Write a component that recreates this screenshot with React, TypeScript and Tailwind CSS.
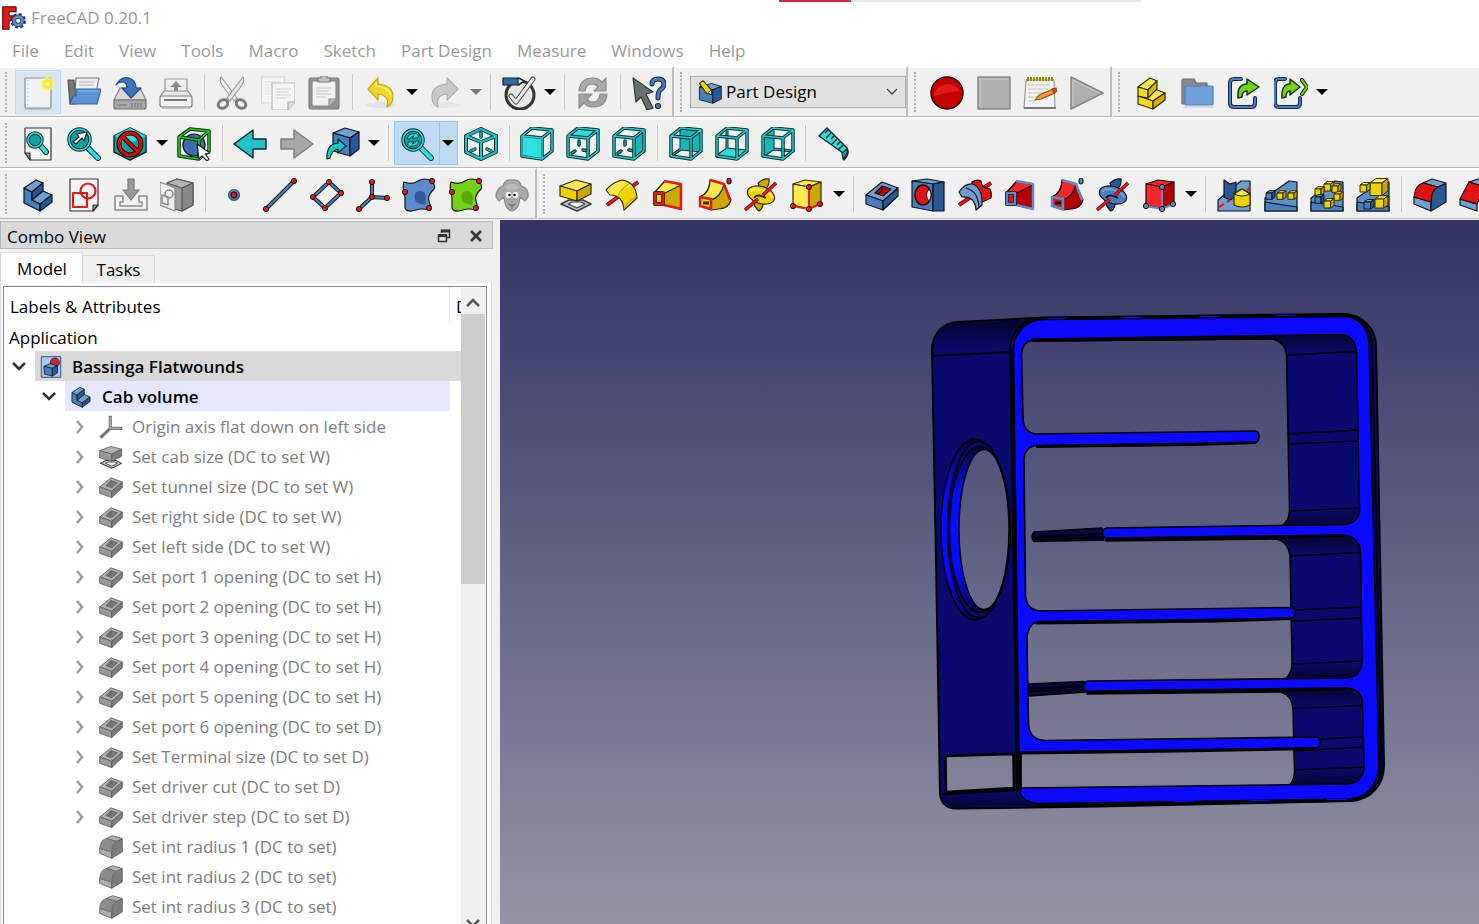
import type { ReactNode } from "react";

const menus = ["File", "Edit", "View", "Tools", "Macro", "Sketch", "Part Design", "Measure", "Windows", "Help"];

type Palette = { light: string; mid: string; dark: string; line: string };

const blue: Palette = { light: "#729fcf", mid: "#4a7fbf", dark: "#2b5797", line: "#0b1521" };
const yellow: Palette = { light: "#fce94f", mid: "#edd400", dark: "#c9a800", line: "#302b00" };
const red: Palette = { light: "#ef2929", mid: "#dd1515", dark: "#b30000", line: "#280000" };
const gray: Palette = { light: "#b0b0b0", mid: "#9a9a9a", dark: "#7d7d7d", line: "#5c5c5c" };

const CYAN = "#2fdede";
const TEAL = "#12a3a6";
const INK = "#0b2c2e";

function Svg({ children, className = "w-[34px] h-[34px]" }: { children: ReactNode; className?: string }) {
  return (
    <svg viewBox="0 0 34 34" className={className} fill="none" strokeLinejoin="round" strokeWidth={1.2} aria-hidden="true">
      {children}
    </svg>
  );
}

// Double stroke: dark outline with a coloured core
function Rod({ d, color, line = "#1a1a1a", width = 2 }: { d: string; color: string; line?: string; width?: number }) {
  return (
    <>
      <path d={d} stroke={line} strokeWidth={width + 2} strokeLinecap="round" />
      <path d={d} stroke={color} strokeWidth={width} strokeLinecap="round" />
    </>
  );
}

function Dots({ points, fill = "#e01b1b", r = 2.6 }: { points: number[][]; fill?: string; r?: number }) {
  return (
    <>
      {points.map(([x, y]) => (
        <circle key={`${x}-${y}`} cx={x} cy={y} r={r} fill={fill} stroke="#280000" strokeWidth={1} />
      ))}
    </>
  );
}

/* ---------- file icons ---------- */

const NewFile = () => (
  <Svg>
    <ellipse cx="17" cy="33" rx="15" ry="1" fill="#b9c3cb" />
    <rect x="4" y="2" width="26" height="30" rx="1" fill="#f1f1f1" stroke="#8b8b8b" />
    <path d="M6.500 4v26" stroke="#c9c9c9" strokeDasharray="1 3" />
    <circle cx="26.500" cy="8" r="7" fill="#fff27a" opacity=".7" />
    <circle cx="26.500" cy="8" r="5" fill="#ffe628" />
    <circle cx="26.500" cy="8" r="2" fill="#fffbd0" />
  </Svg>
);

const OpenFile = () => (
  <Svg>
    <path d="M1 4h6l2 24H3z" fill="#777" stroke="#555" />
    <path d="M9 2h23l-3 15H8z" fill="#f0f0f0" stroke="#777" />
    <path d="M12 6h16M12 9h15" stroke="#b4b4b4" />
    <path d="M9 13h25l-4 15H3l3-8h3z" fill="#5d92d2" stroke="#3465a4" />
    <path d="M11 15h20" stroke="#8db7e6" />
  </Svg>
);

const SaveFile = () => (
  <Svg>
    <path d="M7 12h20l6 12H1z" fill="#d8d8d8" stroke="#888" />
    <path d="M1 24h32v7q0 2-2 2H3q-2 0-2-2z" fill="#a8a8a8" stroke="#6d6d6d" />
    <path d="M4 29h10M19 27v4M22 27v4M25 27v4M28 27v4" stroke="#777" />
    <path d="M3 9Q8 0 16 2q7 2 7 10h5L18 22 9 12h5q0-6-5-6-4 0-6 3z" fill="#3f74b8" stroke="#204a87" />
  </Svg>
);

const Printer = () => (
  <Svg>
    <path d="M6 3h22v15H6z" fill="#eee" stroke="#999" />
    <path d="M17 5l6 6h-4v5h-4v-5h-4z" fill="#8a8a8a" />
    <path d="M5 15h24l4 6H1z" fill="#e9e9e9" stroke="#8a8a8a" />
    <rect x="1" y="20" width="32" height="11" rx="2" fill="#f2f2f2" stroke="#7d7d7d" />
    <path d="M5 24h23" stroke="#777" strokeWidth="2" />
    <path d="M3 32h28" stroke="#aaa" />
  </Svg>
);

const Scissors = () => (
  <Svg>
    <path d="M6 1q-2 3 1 8l12 16 3-3z" fill="#f4f4f4" stroke="#999" />
    <path d="M28 1q2 3-1 8L15 25l-3-3z" fill="#e6e6e6" stroke="#999" />
    <ellipse cx="8" cy="28" rx="5" ry="4" stroke="#7a7a7a" strokeWidth="3" transform="rotate(-35 8 28)" />
    <ellipse cx="26" cy="28" rx="5" ry="4" stroke="#7a7a7a" strokeWidth="3" transform="rotate(35 26 28)" />
  </Svg>
);

const CopyPages = () => (
  <Svg>
    <rect x="0.500" y="1" width="23" height="26" fill="#f5f5f5" stroke="#d4d4d4" />
    <path d="M4 6h15M4 9h15M4 12h6M4 15h6M4 18h6" stroke="#dcdcdc" />
    <path d="M11 7h23v19l-7 8H11z" fill="#f5f5f5" stroke="#bdbdbd" />
    <path d="M34 26h-7v8" fill="#ddd" stroke="#aaa" />
    <path d="M15 13h15M15 16h13M15 19h15M15 22h10" stroke="#cfcfcf" />
  </Svg>
);

const Clipboard = () => (
  <Svg>
    <rect x="2" y="2" width="30" height="31" rx="2" fill="#949494" stroke="#7b7b7b" />
    <path d="M5 5h24v18l-7 7H5z" fill="#f2f2f2" stroke="#888" />
    <path d="M29 23h-7v7" fill="#bbb" stroke="#888" />
    <path d="M11 6V2h3V0h6v2h3v4z" fill="#c4c4c4" stroke="#777" />
    <path d="M9 12h15M9 15h13M9 18h15M9 21h10" stroke="#c5c5c5" />
  </Svg>
);

const Undo = () => (
  <Svg>
    <ellipse cx="17" cy="29" rx="15" ry="3" fill="#e2e2e2" />
    <path d="M14 2v6q15 1 15 13 0 7-6 10 3-12-9-13v6L4 13z" fill="#efd82b" stroke="#c4a40c" />
    <path d="M12 6v4q12 1 15 9" stroke="#fff59a" />
  </Svg>
);

const Redo = () => (
  <Svg>
    <ellipse cx="17" cy="29" rx="15" ry="3" fill="#e5e5e5" />
    <path d="M19 2v6Q4 9 4 21q0 7 6 10Q7 19 19 18v6l11-11z" fill="#cacaca" stroke="#ababab" />
  </Svg>
);

const CheckSketch = () => (
  <Svg>
    <circle cx="18" cy="19" r="14" fill="#e6e6e6" stroke="#2e3436" strokeWidth="3" />
    <path d="M1 2h16l5 3-5 4H1z" fill="#3465a4" stroke="#101c30" />
    <path d="M16 2l6 3-6 4z" fill="#eee" stroke="#222" />
    <Rod d="M9 20l5 6L31 3" color="#e9e9e9" line="#454545" width={3} />
  </Svg>
);

const Refresh = () => (
  <Svg>
    <path d="M3 15Q4 2 17 2q6 0 9 4l4-4v13H18l4-4q-2-3-6-3-6 0-7 7z" fill="#aaa" stroke="#8a8a8a" />
    <path d="M31 18q-1 13-14 13-6 0-9-4l-5 5V18h13l-5 5q2 3 6 3 6 0 7-8z" fill="#a2a2a2" stroke="#8a8a8a" />
  </Svg>
);

const WhatsThis = () => (
  <Svg>
    <path d="M1 2l20 14-7 2 7 14-6 2-6-13-5 5z" fill="#6a6e6c" stroke="#2e3436" />
    <Rod d="M20 8q0-5 6-5 6 0 6 5 0 4-4 6-2 2-2 8" color="#4879bb" line="#14294a" width={3} />
    <circle cx="26" cy="30" r="2.500" fill="#4879bb" stroke="#14294a" />
  </Svg>
);

const Record = () => (
  <Svg>
    <circle cx="17" cy="17" r="16" fill="#c30000" stroke="#280000" strokeWidth="1.500" />
    <path d="M4 20a14 14 0 0 1 26-5Q17 16 4 20z" fill="#e01c1c" />
  </Svg>
);

const Stop = () => (
  <Svg>
    <rect x="1" y="1" width="32" height="32" fill="#b0b0b0" stroke="#888" strokeWidth="1.500" />
    <path d="M3 31V3h28" stroke="#c8c8c8" />
  </Svg>
);

const MacroEdit = () => (
  <Svg>
    <path d="M3 4h28l1 28H1z" fill="#f3f3f3" stroke="#989898" />
    <path d="M1 32h32" stroke="#777" strokeWidth="2" />
    <path d="M5 9h22M5 13h20M5 17h22M5 21h10M5 25h7" stroke="#c2c2c2" />
    <path d="M5 1v4M8 1v4M11 1v4M14 1v4M17 1v4M20 1v4M23 1v4M26 1v4M29 1v4" stroke="#938300" strokeWidth="2" />
    <path d="M12 24l4-5 14-6 2 4-14 6z" fill="#eb9c3b" stroke="#96500c" />
    <path d="M29 13l4-1 1 3-3 2z" fill="#e04242" stroke="#96500c" />
  </Svg>
);

const Play = () => (
  <Svg>
    <path d="M1 1l32 16L1 33z" fill="#b0b0b0" stroke="#858585" strokeWidth="1.500" />
    <path d="M3 30V4l26 13" stroke="#c8c8c8" />
  </Svg>
);

const PartIcon = () => (
  <Svg>
    <g stroke={yellow.line}>
      <path d="M4 20l14-8 13 5-12 8z" fill="#fce94f" />
      <path d="M4 20l15 5v8L4 28z" fill="#f2dd20" />
      <path d="M19 25l12-8v7l-12 9z" fill="#d0ae00" />
      <path d="M4 11l12-9 7 3-9 9z" fill="#fce94f" />
      <path d="M4 11l10 3v8L4 20z" fill="#f2dd20" />
      <path d="M14 14l9-9v8l-9 9z" fill="#d9b900" />
    </g>
  </Svg>
);

const GroupFolder = () => (
  <Svg>
    <path d="M1 4q0-1 1-1h11l2 4h11v21H1z" fill="#8a8a8a" stroke="#6b6b6b" />
    <rect x="4" y="10" width="28" height="19" rx="1" fill="#6fa0da" stroke="#4a7dbd" />
    <path d="M2 31h31" stroke="#cfcfcf" />
  </Svg>
);

const MakeLink = () => (
  <Svg>
    <Rod d="M14 3H7q-4 0-4 4v20q0 4 4 4h17q4 0 4-4v-5" color="#4a7dbd" line="#14294a" width={2} />
    <path d="M11 22Q10 8 20 8V3l12 8-12 8v-4q-5 0-5 6z" fill="#73d216" stroke="#17380a" strokeWidth="1.500" />
  </Svg>
);

const LinkActions = () => (
  <Svg>
    <Rod d="M11 3H5q-4 0-4 4v20q0 4 4 4h17q4 0 4-4v-5" color="#4a7dbd" line="#14294a" width={2} />
    <path d="M8 22Q7 8 16 8V3l10 8-10 8v-4q-4 0-4 6z" fill="#73d216" stroke="#17380a" strokeWidth="1.500" />
    <Rod d="M28 4l5 7-5 7" color="#73d216" line="#17380a" />
  </Svg>
);

/* ---------- view icons ---------- */

function Lens({ x = 13, y = 14, r = 9, hx = 30, hy = 31 }) {
  return (
    <>
      <Rod d={`M${x + r * 0.7} ${y + r * 0.7}L${hx} ${hy}`} color={CYAN} line={INK} width={4} />
      <circle cx={x} cy={y} r={r} fill={TEAL} stroke={INK} strokeWidth="3.500" />
      <circle cx={x} cy={y} r={r} stroke={CYAN} strokeWidth="1.500" />
    </>
  );
}

const FitAll = () => (
  <Svg>
    <path d="M4 1h26v32H9l-5-7z" fill="#f3f3f3" stroke="#333" />
    <path d="M4 26h5v7z" fill="#999" stroke="#333" />
    <Lens x={14} y={13} r={7} hx={25} hy={25} />
  </Svg>
);

const FitSelection = () => (
  <Svg>
    <Lens x={12.500} y={12.500} r={10.500} hx={31} hy={31} />
    <path d="M6 15l6-5-2-3 10-2-3 9-2-3-6 6z" fill="#fff" stroke="#222" />
  </Svg>
);

const DrawStyle = () => (
  <Svg>
    <path d="M17 1l16 8v16l-16 8-16-8V9z" fill={TEAL} stroke={INK} strokeWidth="1.500" />
    <path d="M17 1l16 8-16 7L1 9z" fill={CYAN} />
    <circle cx="17" cy="17" r="11" stroke="#280000" strokeWidth="5" />
    <path d="M9 9l16 16" stroke="#280000" strokeWidth="5" />
    <circle cx="17" cy="17" r="11" stroke="#d01010" strokeWidth="3" />
    <path d="M9 9l16 16" stroke="#d01010" strokeWidth="3" />
  </Svg>
);

const BoundBox = () => (
  <Svg>
    <circle cx="17" cy="18" r="11" fill="#3b6db0" stroke="#0b1521" />
    <Rod d="M2 10l20 3v19L2 29zM2 10l11-8 19 2-10 9M32 4v20l-10 8" color="#19d619" line="#0a2f0a" width={1.500} />
    <path d="M20 17l13 9-5 1 4 5-2 2-5-5-3 3z" fill="#fff" stroke="#222" />
  </Svg>
);

const Back = () => (
  <Svg>
    <path d="M1 17L20 3v9h13v10H20v9z" fill="#1fc4c7" stroke={INK} strokeWidth="1.500" />
  </Svg>
);

const Forward = () => (
  <Svg>
    <path d="M33 17L14 3v9H1v10h13v9z" fill="#a8a8a8" stroke="#7c7c7c" strokeWidth="1.500" />
  </Svg>
);

const LinkNav = () => (
  <Svg>
    <path d="M7 6l12-5 14 4-9 6z" fill={blue.light} stroke={blue.line} />
    <path d="M7 6l17 5v18L7 24z" fill={blue.mid} stroke={blue.line} />
    <path d="M24 11l9-6v17l-9 7z" fill={blue.dark} stroke={blue.line} />
    <path d="M1 32q-1-15 11-16v-4l8 7-8 7v-4q-6 1-8 9z" fill="#1fc4c7" stroke={INK} />
  </Svg>
);

const SyncView = () => (
  <Svg>
    <Lens x={13} y={13} r={10} hx={31} hy={31} />
    <path d="M7 12q2-6 8-5l3-2v6h-6l2-2q-3 0-4 3zM19 14q-2 6-8 5l-3 2v-6h6l-2 2q3 0 4-3z" fill={CYAN} stroke={INK} strokeWidth=".8" />
  </Svg>
);

const IsoView = () => (
  <Svg>
    <path d="M17 2l15 7v16l-15 7-15-7V9z" fill="#f0f0f0" />
    <Rod d="M17 2l15 7v16l-15 7-15-7V9zM2 9l15 6 15-6M17 15v17" color="#1fc4c7" line={INK} />
    <path d="M17 6v4M7 24l4-2M27 24l-4-2" stroke={INK} strokeWidth="3.500" strokeLinecap="round" />
    <path d="M17 6v4M7 24l4-2M27 24l-4-2" stroke={TEAL} strokeWidth="2" strokeLinecap="round" />
  </Svg>
);

const cubeFaces: Record<string, string> = {
  front: "M2 9l20 2v21L2 29z",
  top: "M2 9l20 2 10-8-20-2z",
  right: "M22 11l10-8v21l-10 8z",
  rear: "M12 1l20 2v21l-20-2z",
  bottom: "M2 29l20 3 10-8-20-2z",
  left: "M2 9l10-8v21L2 29z",
};

function ViewCube({ face }: { face: string }) {
  const solid = face === "front" || face === "top" || face === "right";
  return (
    <Svg>
      {!solid && <Rod d="M12 1v21L2 29M12 22l20 2" color="#1fc4c7" line={INK} width={1} />}
      {solid && face !== "front" && (
        <>
          <path d="M13 14v4M6 26l3-2M17 23l5 1" stroke={INK} strokeWidth="3.500" strokeLinecap="round" />
          <path d="M13 14v4M6 26l3-2M17 23l5 1" stroke={TEAL} strokeWidth="1.500" strokeLinecap="round" />
        </>
      )}
      <path d={cubeFaces[face]} fill={face === "right" || face === "left" || face === "rear" ? "#1cb6b9" : CYAN} />
      <Rod d="M2 9l20 2v21L2 29zM2 9l10-8 20 2-10 8M32 3v21l-10 8" color="#22cdd0" line={INK} width={1.500} />
      {face === "front" && <path d="M3 10l18 2v19L3 28z" fill={CYAN} />}
    </Svg>
  );
}

const Ruler = () => (
  <Svg>
    <path d="M2 9l8-8 20 20q3 6-3 12l-1-7z" fill={CYAN} stroke={INK} strokeWidth="1.500" />
    <path d="M25 26l5-4q1 6-4 10z" fill={TEAL} stroke={INK} />
    <path d="M11 3l-3 3M14 6l-5 5M17 9l-3 3M20 12l-5 5M23 15l-3 3M26 18l-5 5" stroke={INK} strokeWidth="1.500" />
  </Svg>
);

/* ---------- part design icons ---------- */

const Body = ({ className }: { className?: string }) => (
  <Svg className={className}>
    <g stroke={blue.line}>
      <path d="M3 10l8 4v8l8 4v7L3 25z" fill={blue.mid} />
      <path d="M3 10l12-8 7 3-11 9z" fill={blue.light} />
      <path d="M11 14l11-9v8l-11 9z" fill={blue.dark} />
      <path d="M11 22l11-9 9 4-12 9z" fill={blue.light} />
      <path d="M19 26l12-9v7l-12 9z" fill={blue.dark} />
    </g>
  </Svg>
);

const SketchIcon = () => (
  <Svg>
    <path d="M3 1h28v26l-5 6H3z" fill="#f5f5f5" stroke="#333" />
    <path d="M31 27h-5v6z" fill="#999" stroke="#333" />
    <rect x="6" y="15" width="14" height="14" stroke="#e01b1b" strokeWidth="2.200" />
    <circle cx="21" cy="13" r="7.500" stroke="#e01b1b" strokeWidth="2.200" />
  </Svg>
);

const ImportSketch = () => (
  <Svg>
    <path d="M1 18h8v6H6v4h22v-4h-3v-6h8v14H1z" fill="#f3f3f3" stroke="#888" strokeWidth="1.500" />
    <path d="M14 1h6v11h5l-8 10-8-10h5z" fill="#9a9a9a" stroke="#777" />
  </Svg>
);

const MapSketch = () => (
  <Svg>
    <path d="M7 5l10-4 16 4v22l-11 6-15-4z" fill="#9a9a9a" stroke="#555" />
    <path d="M7 5l15 5 11-5-16-4z" fill="#b7b7b7" stroke="#555" />
    <path d="M22 10l11-5v22l-11 6z" fill="#888" stroke="#555" />
    <path d="M0 4l15 6v23L0 27z" fill="#efefef" stroke="#888" />
    <circle cx="9" cy="16" r="4" stroke="#888" strokeWidth="1.500" />
    <path d="M2 17l6 2v8l-6-2z" stroke="#888" strokeWidth="1.500" />
  </Svg>
);

const PointIcon = () => (
  <Svg>
    <circle cx="17" cy="17" r="5.500" fill="#4a7fbf" stroke="#2b5797" />
    <circle cx="17" cy="17" r="2.800" fill="#e01b1b" stroke="#5a0000" />
  </Svg>
);

const LineIcon = () => (
  <Svg>
    <Rod d="M3 31L31 3" color="#4a7fbf" />
    <Dots points={[[3, 31], [31, 3]]} />
  </Svg>
);

const PlaneIcon = () => (
  <Svg>
    <Rod d="M19 4l12 11-16 15L3 19z" color="#4a7fbf" />
    <Dots points={[[19, 4], [31, 15], [15, 30], [3, 19]]} />
  </Svg>
);

const AxesIcon = () => (
  <Svg>
    <Rod d="M16 4v15l15 1M16 19L3 31" color="#4a7fbf" />
    <Dots points={[[16, 4], [16, 19], [31, 20], [3, 31]]} />
  </Svg>
);

function Patch({ fill, shade }: { fill: string; shade: string }) {
  return (
    <Svg>
      <path d="M2 4q8 3 14-1t14 0q4 5 2 8-7 7-5 12 3 9-1 9-6-2-12 0-9 3-11-2 0-5 0-11-3-8-1-15z" fill={fill} stroke="#0b1521" />
      <path d="M14 14q7-3 9 2t0 11q-6-1-9-3-3-6 0-10z" fill={shade} opacity=".7" />
      <Dots points={[[30, 3], [3, 14], [27, 30]]} />
    </Svg>
  );
}

const Sheep = () => (
  <Svg>
    <path d="M8 8q2-7 9-6 8-1 9 6 8 2 7 11l-3 4-5-4q-1 13-8 14-7-1-8-14l-5 4-3-4Q1 10 8 8z" fill="#a9a9a9" stroke="#888" />
    <path d="M9 9q8-6 16 0-2 3-8 2-6 1-8-2z" fill="#bcbcbc" />
    <circle cx="13.500" cy="17" r="3" fill="#fff" />
    <circle cx="20.500" cy="17" r="3" fill="#fff" />
    <circle cx="14.500" cy="17" r="1.300" fill="#222" />
    <circle cx="19.500" cy="17" r="1.300" fill="#222" />
    <path d="M14 26l3 2 3-2M17 28v3" stroke="#666" />
  </Svg>
);

function Pad({ c = yellow, className }: { c?: Palette; className?: string }) {
  return (
    <Svg className={className}>
      <path d="M2 26l8-4h14l8 4-14 7z" fill="#ccc" stroke="#3a3a3a" strokeWidth="1.500" />
      <path d="M9 26l4-2h9l4 2-8 4z" fill="#f0f0f0" stroke="#3a3a3a" />
      <g stroke={c.line}>
        <path d="M1 8l16-6 15 4-14 7z" fill={c.light} />
        <path d="M1 8l17 5v10L1 18z" fill={c.mid} />
        <path d="M18 13l14-7v10l-14 7z" fill={c.dark} />
      </g>
    </Svg>
  );
}

const Revolution = () => (
  <Svg>
    <path d="M2 27L33 4" stroke="#7a0000" strokeWidth="4" />
    <path d="M2 27L33 4" stroke="#e01b1b" strokeWidth="2.500" />
    <path d="M1 12Q9 3 18 2q13 3 14 18L19 32q-1-15-14-15z" fill={yellow.mid} stroke={yellow.line} />
    <path d="M2 12Q9 4 18 3q6 2 9 6-9-1-14 8-4-1-8-1z" fill={yellow.light} />
    <path d="M13 17q4-7 11-11M19 31q3-7 12-12" stroke={yellow.dark} />
  </Svg>
);

const Groove = () => (
  <Svg>
    <path d="M1 27L33 5" stroke="#7a0000" strokeWidth="4" />
    <path d="M1 27L33 5" stroke="#e01b1b" strokeWidth="2.500" />
    <path d="M14 4q5-3 9-1 0 7 9 8 2 4 1 9l-9 4Q22 11 14 10z" fill={red.mid} stroke={red.line} />
    <path d="M1 14Q7 5 15 6q10 5 9 21l-6 5q-1-14-14-13z" fill={blue.light} stroke={blue.line} />
    <path d="M8 10q12 3 13 19" stroke={blue.line} />
  </Svg>
);

function Loft({ c, edge }: { c: Palette; edge: string }) {
  return (
    <Svg>
      <path d="M3 14L13 3l16 4v24L11 27z" fill={c.mid} stroke={c.line} />
      <path d="M11 15L29 7v24L11 27z" fill={c.dark} />
      <path d="M3 14L13 3l16 4-18 9z" fill={c.light} stroke={c.line} />
      <path d="M12 3l17 3v25l-17-4" stroke={edge} strokeWidth="2.500" />
      <path d="M3 15h8v11H3z" fill={c.mid} stroke={c.line} strokeWidth="4" />
      <path d="M3 15h8v11H3z" stroke={edge} strokeWidth="2.500" />
    </Svg>
  );
}

function Pipe({ c, edge }: { c: Palette; edge: string }) {
  return (
    <Svg>
      <path d="M2 19Q12 14 12 2l14 4 7 16q-2 8-12 9l-8 1-11-4z" fill={c.dark} stroke={c.line} />
      <path d="M2 19Q12 15 12 2l14 4q-3 13-13 16z" fill={c.light} stroke={c.line} />
      <path d="M12 2l14 4 6 16" stroke={edge} strokeWidth="2.500" />
      <path d="M2 19l11 2v10L2 28z" fill={c.mid} stroke={edge} strokeWidth="2.500" />
      <path d="M5 25h6" stroke={c.line} strokeWidth="3" />
      <ellipse cx="31" cy="3" rx="2" ry="3" fill={edge} stroke="#222" />
    </Svg>
  );
}

function Helix({ c }: { c: Palette }) {
  return (
    <Svg>
      <path d="M14 5q6-5 11-4 1 8-7 13z" fill={c.dark} stroke={c.line} />
      <path d="M9 23q2 7 6 10 5-3 4-11z" fill={c.dark} stroke={c.line} />
      <ellipse cx="17" cy="17" rx="14" ry="8.500" fill={c.mid} stroke={c.line} transform="rotate(18 17 17)" />
      <path d="M6 14q3-5 12-2 9 3 11 8" stroke={c.light} strokeWidth="2" />
      <path d="M10 20q3-5 12 0" stroke={c.line} strokeWidth="2" />
      <path d="M1 32L14 21M19 17L32 5" stroke="#8a0000" strokeWidth="3.500" />
      <path d="M1 32L14 21M19 17L32 5" stroke="#e01b1b" strokeWidth="2" />
    </Svg>
  );
}

function Primitive({ c, dot }: { c: Palette; dot: string }) {
  return (
    <Svg>
      <path d="M3 6l12-4 16 2-12 5z" fill={c.light} stroke={c.line} />
      <path d="M3 6l16 3v22L3 27z" fill={c.light} stroke={c.line} />
      <path d="M19 9l12-5v21l-12 6z" fill={c.dark} stroke={c.line} />
      <path d="M3 28l16 3 11-5M19 31V10" stroke={dot} strokeWidth="2" />
      <Dots points={[[19, 9], [3, 28], [19, 31], [30, 26]]} fill={dot} />
    </Svg>
  );
}

function Pocket({ c = blue, hole = "#cc0000", className }: { c?: Palette; hole?: string; className?: string }) {
  return (
    <Svg className={className}>
      <g stroke={c.line}>
        <path d="M1 17L17 4l16 6-15 13z" fill={c.light} />
        <path d="M1 17l17 6v9L1 26z" fill={c.mid} />
        <path d="M18 23l15-13v8L18 32z" fill={c.dark} />
        <path d="M10 15l7-7 9 3-8 7z" fill={hole} />
        <path d="M17 8v5l-4 3" />
      </g>
    </Svg>
  );
}

const Hole = () => (
  <Svg>
    <path d="M1 3l15-2 17 3-11 2z" fill={blue.light} stroke={blue.line} />
    <path d="M1 3l21 3v27L1 29z" fill={blue.mid} stroke={blue.line} />
    <path d="M22 6l11-2v29H22z" fill={blue.dark} stroke={blue.line} />
    <ellipse cx="12" cy="17" rx="8" ry="10" fill="#dd1515" stroke="#280000" strokeWidth="1.500" />
    <path d="M18 11q4 6 0 12-5-6 0-12z" fill="#f3f3f3" stroke="#280000" strokeWidth=".8" />
  </Svg>
);

function MiniCube({ x, y, s, c }: { x: number; y: number; s: number; c: Palette }) {
  return (
    <g stroke={c.line} strokeWidth="1">
      <path d={`M${x} ${y}l${s / 3} ${-s / 4}h${s * 0.67}l${-s / 3} ${s / 4}z`} fill={c.light} />
      <path d={`M${x} ${y}h${s * 0.67}v${s * 0.7}h${-s * 0.67}z`} fill={c.mid} />
      <path d={`M${x + s * 0.67} ${y}l${s * 0.33} ${-s / 4}v${s * 0.7}l${-s * 0.33} ${s / 4}z`} fill={c.dark} />
    </g>
  );
}

const Slab = () => (
  <>
    <path d="M1 20L25 3l8 1v29H1z" fill="#5f92cb" stroke={blue.line} />
    <path d="M1 24l32 5v4H1z" fill={blue.mid} stroke={blue.line} />
  </>
);

const Mirrored = () => (
  <Svg>
    <path d="M1 22L24 3h9v30H1z" fill={blue.light} stroke={blue.line} />
    <path d="M7 2l6 4 6-2v15l-6 3-6-3z" fill={blue.dark} stroke={blue.line} />
    <path d="M2 29l5-3M10 24l3-2M30 12l3-2" stroke="#e01b1b" strokeWidth="2.500" />
    <path d="M17 15v12q8 4 16 0V15l-8-4z" fill={yellow.mid} stroke={yellow.line} />
    <path d="M17 16l8-5 8 5q-8 4-16 0z" fill={yellow.light} stroke={yellow.line} />
  </Svg>
);

const LinearPattern = () => (
  <Svg>
    <Slab />
    <MiniCube x={2} y={15} s={9} c={blue} />
    <MiniCube x={13} y={15} s={9} c={yellow} />
    <MiniCube x={24} y={15} s={9} c={yellow} />
  </Svg>
);

const PolarPattern = () => (
  <Svg>
    <Slab />
    <MiniCube x={14} y={6} s={10} c={yellow} />
    <MiniCube x={5} y={11} s={9} c={yellow} />
    <MiniCube x={22} y={8} s={9} c={yellow} />
    <MiniCube x={5} y={19} s={9} c={blue} />
    <MiniCube x={24} y={16} s={9} c={yellow} />
    <MiniCube x={14} y={23} s={10} c={yellow} />
  </Svg>
);

const MultiTransform = () => (
  <Svg>
    <Slab />
    <MiniCube x={14} y={5} s={18} c={yellow} />
    <MiniCube x={4} y={7} s={10} c={yellow} />
    <MiniCube x={8} y={24} s={10} c={blue} />
    <MiniCube x={19} y={21} s={13} c={yellow} />
  </Svg>
);

function Fillet({ c = blue, top = "#dd1515", line = "#280000", className }: { c?: Palette; top?: string; line?: string; className?: string }) {
  return (
    <Svg className={className}>
      <path d="M1 19l17 5v9L1 26z" fill={c.light} stroke={c.line} />
      <path d="M18 24q0-12 8-16l7-2v18l-15 9z" fill={c.dark} stroke={c.line} />
      <path d="M10 5l9-4 14 4-8 4z" fill={c.light} stroke={c.line} />
      <path d="M1 19Q2 7 10 5l15 4q-7 3-7 15z" fill={top} stroke={line} />
    </Svg>
  );
}

const Chamfer = () => (
  <Svg>
    <path d="M1 21l17 5v7L1 27z" fill={blue.light} stroke={blue.line} />
    <path d="M10 4l9-3 15 4-8 4z" fill={blue.light} stroke={blue.line} />
    <path d="M1 21L10 4l16 5-8 17z" fill="#dd1515" stroke="#280000" />
  </Svg>
);

const AxisTree = () => (
  <Svg className="w-6 h-6">
    <path d="M16 1v18h17M16 19L2 32" stroke="#777" strokeWidth="4.500" />
    <path d="M16 3v16h15" stroke="#a8a8a8" strokeWidth="2" />
  </Svg>
);

const DocumentIcon = () => (
  <Svg className="w-[22px] h-[22px]">
    <rect x="2" y="1" width="30" height="32" fill="#a9c8ee" stroke="#33517a" strokeWidth="1.500" />
    <circle cx="23" cy="10" r="7" fill="#c02a35" stroke="#5a0a12" />
    <path d="M6 16l9-4 12 3-8 4z" fill={blue.light} stroke={blue.line} />
    <path d="M6 16l13 3v12L7 28z" fill={blue.mid} stroke={blue.line} />
    <path d="M19 19l8-4v11l-8 5z" fill={blue.dark} stroke={blue.line} />
  </Svg>
);

const WorkbenchIcon = () => (
  <Svg className="w-6 h-6">
    <path d="M2 10l17-5 14 4-12 5z" fill={blue.light} stroke={blue.line} />
    <path d="M2 10l19 4v19L2 28z" fill={blue.mid} stroke={blue.line} />
    <path d="M21 14l12-5v18l-12 6z" fill={blue.dark} stroke={blue.line} />
    <path d="M2 5l5-4 12 13-1 6-6-1z" fill={yellow.mid} stroke={yellow.line} strokeWidth="1.500" />
    <path d="M14 18l5-4v7z" fill="#fff" stroke="#222" />
  </Svg>
);

const FreeCadLogo = () => (
  <Svg className="w-6 h-6">
    <path d="M1 1h19v7H10v6h8v7h-8v12H1z" fill="#e01b1b" stroke="#5a0000" strokeWidth="1.500" />
    <circle cx="23" cy="21" r="9" stroke="#1c3b6b" strokeWidth="4" strokeDasharray="4 3" />
    <circle cx="23" cy="21" r="6" stroke="#1c3b6b" strokeWidth="6" />
    <circle cx="23" cy="21" r="6" stroke="#5b8bc8" strokeWidth="4" />
    <circle cx="23" cy="21" r="3.500" fill="#fff" stroke="#1c3b6b" />
  </Svg>
);

/* ---------- toolbars ---------- */

type Item = { label: string; icon: ReactNode; menu?: boolean; off?: boolean; state?: "hover" | "checked" } | "|";

const fileTools: Item[] = [
  { label: "New", icon: <NewFile />, state: "hover" },
  { label: "Open", icon: <OpenFile /> },
  { label: "Save", icon: <SaveFile /> },
  { label: "Print", icon: <Printer /> },
  "|",
  { label: "Cut", icon: <Scissors /> },
  { label: "Copy", icon: <CopyPages /> },
  { label: "Paste", icon: <Clipboard /> },
  "|",
  { label: "Undo", icon: <Undo />, menu: true },
  { label: "Redo", icon: <Redo />, menu: true, off: true },
  "|",
  { label: "Validate sketch", icon: <CheckSketch />, menu: true },
  "|",
  { label: "Refresh", icon: <Refresh /> },
  "|",
  { label: "What's This?", icon: <WhatsThis /> },
];

const macroTools: Item[] = [
  { label: "Record macro", icon: <Record /> },
  { label: "Stop recording", icon: <Stop /> },
  { label: "Macros", icon: <MacroEdit /> },
  { label: "Execute macro", icon: <Play /> },
];

const structureTools: Item[] = [
  { label: "Create part", icon: <PartIcon /> },
  { label: "Create group", icon: <GroupFolder /> },
  { label: "Make link", icon: <MakeLink /> },
  { label: "Link actions", icon: <LinkActions />, menu: true },
];

const viewTools: Item[] = [
  { label: "Fit all", icon: <FitAll /> },
  { label: "Fit selection", icon: <FitSelection /> },
  { label: "Draw style", icon: <DrawStyle />, menu: true },
  { label: "Bounding box", icon: <BoundBox /> },
  "|",
  { label: "Back", icon: <Back /> },
  { label: "Forward", icon: <Forward /> },
  { label: "Go to linked object", icon: <LinkNav />, menu: true },
  "|",
  { label: "Sync view", icon: <SyncView />, menu: true, state: "checked" },
  { label: "Isometric", icon: <IsoView /> },
  "|",
  { label: "Front", icon: <ViewCube face="front" /> },
  { label: "Top", icon: <ViewCube face="top" /> },
  { label: "Right", icon: <ViewCube face="right" /> },
  "|",
  { label: "Rear", icon: <ViewCube face="rear" /> },
  { label: "Bottom", icon: <ViewCube face="bottom" /> },
  { label: "Left", icon: <ViewCube face="left" /> },
  "|",
  { label: "Measure distance", icon: <Ruler /> },
];

const helperTools: Item[] = [
  { label: "Create body", icon: <Body /> },
  { label: "Create sketch", icon: <SketchIcon /> },
  { label: "Edit sketch", icon: <ImportSketch /> },
  { label: "Map sketch to face", icon: <MapSketch /> },
  "|",
  { label: "Datum point", icon: <PointIcon /> },
  { label: "Datum line", icon: <LineIcon /> },
  { label: "Datum plane", icon: <PlaneIcon /> },
  { label: "Local coordinate system", icon: <AxesIcon /> },
  { label: "Shape binder", icon: <Patch fill="#5b8bc8" shade="#204a87" /> },
  { label: "Sub-shape binder", icon: <Patch fill="#73d216" shade="#4e9a06" /> },
  { label: "Clone", icon: <Sheep /> },
];

const modelingTools: Item[] = [
  { label: "Pad", icon: <Pad /> },
  { label: "Revolution", icon: <Revolution /> },
  { label: "Additive loft", icon: <Loft c={yellow} edge="#e01b1b" /> },
  { label: "Additive pipe", icon: <Pipe c={yellow} edge="#e01b1b" /> },
  { label: "Additive helix", icon: <Helix c={yellow} /> },
  { label: "Additive primitive", icon: <Primitive c={yellow} dot="#e01b1b" />, menu: true },
  "|",
  { label: "Pocket", icon: <Pocket /> },
  { label: "Hole", icon: <Hole /> },
  { label: "Groove", icon: <Groove /> },
  { label: "Subtractive loft", icon: <Loft c={red} edge="#5b8bc8" /> },
  { label: "Subtractive pipe", icon: <Pipe c={red} edge="#5b8bc8" /> },
  { label: "Subtractive helix", icon: <Helix c={blue} /> },
  { label: "Subtractive primitive", icon: <Primitive c={red} dot="#5b8bc8" />, menu: true },
  "|",
  { label: "Mirrored", icon: <Mirrored /> },
  { label: "Linear pattern", icon: <LinearPattern /> },
  { label: "Polar pattern", icon: <PolarPattern /> },
  { label: "MultiTransform", icon: <MultiTransform /> },
  "|",
  { label: "Fillet", icon: <Fillet /> },
  { label: "Chamfer", icon: <Chamfer /> },
];

const buttonStates = {
  none: "border-transparent",
  hover: "border-[#b9d9f2] bg-[#d8e6f2]",
  checked: "border-[#90c8f6] bg-[#bfdaf2]",
};

function ToolItem({ item }: { item: Item }) {
  if (item === "|") {
    return <div className="w-[10px] shrink-0 flex justify-center"><span className="w-px h-9 bg-[#c8c8c8]" /></div>;
  }
  const look = buttonStates[item.state ?? "none"];
  return (
    <div className="flex shrink-0 h-11">
      <button aria-label={item.label} className={`w-[46px] pt-px border flex items-center justify-center ${look}`}>
        {item.icon}
      </button>
      {item.menu && (
        <button aria-label={`${item.label} menu`} className={`w-[18px] border border-l-0 flex items-center justify-center ${look}`}>
          <svg viewBox="0 0 12 6" className="w-3 h-1.5" aria-hidden="true">
            <path d="M0 0h12L6 6z" fill={item.off ? "#777" : "#000"} />
          </svg>
        </button>
      )}
    </div>
  );
}

function Toolbar({ className, inner = "", children }: { className: string; inner?: string; children: ReactNode }) {
  return (
    <div role="toolbar" className={`h-[51px] flex items-center bg-[#f0f0f0] border-t-2 border-t-white border-b border-b-[#b4b4b4] overflow-hidden ${className}`}>
      <span className="ml-[5px] mr-2 h-10 shrink-0 border-l-2 border-dotted border-[#b0b0b0]" />
      <div className={`flex items-center justify-between shrink-0 ${inner}`}>{children}</div>
    </div>
  );
}

const Tools = ({ items }: { items: Item[] }) => (
  <>
    {items.map((item, i) => (
      <ToolItem key={i} item={item} />
    ))}
  </>
);

const divided = "border-r-2 border-r-[#bdbdbd] mr-px shrink-0";

/* ---------- model tree ---------- */

const grayBody = <Pocket c={gray} hole="#777" className="w-6 h-6" />;
const grayFillet = <Fillet c={gray} top="#8b8b8b" line="#6c6c6c" className="w-6 h-6" />;

const features: { name: string; icon: ReactNode; leaf?: boolean }[] = [
  { name: "Origin axis flat down on left side", icon: <AxisTree /> },
  { name: "Set cab size (DC to set W)", icon: <Pad c={gray} className="w-6 h-6" /> },
  { name: "Set tunnel size (DC to set W)", icon: grayBody },
  { name: "Set right side (DC to set W)", icon: grayBody },
  { name: "Set left side (DC to set W)", icon: grayBody },
  { name: "Set port 1 opening (DC to set H)", icon: grayBody },
  { name: "Set port 2 opening (DC to set H)", icon: grayBody },
  { name: "Set port 3 opening (DC to set H)", icon: grayBody },
  { name: "Set port 4 opening (DC to set H)", icon: grayBody },
  { name: "Set port 5 opening (DC to set H)", icon: grayBody },
  { name: "Set port 6 opening (DC to set D)", icon: grayBody },
  { name: "Set Terminal size (DC to set D)", icon: grayBody },
  { name: "Set driver cut (DC to set D)", icon: grayBody },
  { name: "Set driver step (DC to set D)", icon: grayBody },
  { name: "Set int radius 1 (DC to set)", icon: grayFillet, leaf: true },
  { name: "Set int radius 2 (DC to set)", icon: grayFillet, leaf: true },
  { name: "Set int radius 3 (DC to set)", icon: grayFillet, leaf: true },
];

function Chevron({ dir, color = "#333" }: { dir: "up" | "down" | "right"; color?: string }) {
  const d = { up: "M1 10l6-6 6 6", down: "M1 4l6 6 6-6", right: "M5 1l5 6-5 6" }[dir];
  return (
    <svg viewBox="0 0 14 14" className="w-[14px] h-[14px]" fill="none" stroke={color} strokeWidth="2.500" aria-hidden="true">
      <path d={d} />
    </svg>
  );
}

function ModelTree() {
  return (
    <div className="flex-1 min-h-0 flex border border-b-0 border-[#828790] bg-white overflow-hidden">
      <div className="flex-1 min-w-0 overflow-hidden">
        <div className="h-9 flex items-center overflow-hidden">
          <span className="w-[446px] shrink-0 h-full pl-[6px] pt-2 border-r border-[#e5e5e5]">Labels &amp; Attributes</span>
          <span className="shrink-0 pl-[6px] pt-1">Description</span>
        </div>
        <div className="h-7 flex items-center pl-[5px] pt-px">Application</div>
        <ul role="tree" aria-label="Application">
          <li role="treeitem" aria-expanded="true">
            <div className="flex h-[30px] items-center font-semibold">
              <button aria-label="Collapse document" className="w-[31px] pl-2"><Chevron dir="down" /></button>
              <div className="flex-1 h-full flex items-center gap-[10px] pl-[5px] pt-px bg-[#d9d9d9]">
                <DocumentIcon />
                Bassinga Flatwounds
              </div>
            </div>
            <ul role="group">
              <li role="treeitem" aria-expanded="true">
                <div className="flex h-[30px] items-center font-semibold">
                  <button aria-label="Collapse body" className="w-[61px] pl-[38px]"><Chevron dir="down" /></button>
                  <div className="flex-1 h-full mr-[11px] flex items-center gap-[10px] pl-[5px] pt-px bg-[#e6e6ff]">
                    <Body className="w-[22px] h-[22px]" />
                    Cab volume
                  </div>
                </div>
                <ul role="group">
                  {features.map((f) => (
                    <li key={f.name} role="treeitem" className="flex h-[30px] pt-px items-center text-[#7d7d7d]">
                      <span className="w-[95px] pl-[68px]">{!f.leaf && <Chevron dir="right" color="#9d9d9d" />}</span>
                      <span className="w-[33px] flex">{f.icon}</span>
                      <span className="whitespace-nowrap">{f.name}</span>
                    </li>
                  ))}
                </ul>
              </li>
            </ul>
          </li>
        </ul>
      </div>
      <div className="w-6 mr-px mt-px shrink-0 bg-[#f0f0f0] flex flex-col">
        <button aria-label="Scroll up" className="h-[26px] pt-1 flex items-center justify-center"><Chevron dir="up" color="#555" /></button>
        <div className="h-[270px] bg-[#cdcdcd]" />
        <button aria-label="Scroll down" className="mt-auto h-2 overflow-hidden flex justify-center"><Chevron dir="down" color="#555" /></button>
      </div>
    </div>
  );
}

function ComboView() {
  return (
    <aside className="w-[493px] shrink-0 flex flex-col pt-[2px]">
      <div className="h-7 shrink-0 flex items-center pl-[6px] pr-[9px] pt-[2px] border border-[#b9b9b9] bg-[#dadada]">
        <h2 className="flex-1 pt-[2px]">Combo View</h2>
        <button aria-label="Float panel" className="mr-[18px]">
          <svg viewBox="0 0 14 14" className="w-[14px] h-[14px]" fill="none" stroke="#333" aria-hidden="true">
            <path d="M4.500 4V1.500h8v7H10" strokeWidth="1.500" />
            <path d="M4 2h9" strokeWidth="3" />
            <path d="M1.500 6.500h8v6h-8z" strokeWidth="1.500" />
            <path d="M1 6.500h9" strokeWidth="3" />
          </svg>
        </button>
        <button aria-label="Close panel">
          <svg viewBox="0 0 14 14" className="w-[14px] h-[14px]" stroke="#333" strokeWidth="2.800" aria-hidden="true">
            <path d="M2 2l10 10M12 2L2 12" />
          </svg>
        </button>
      </div>
      <div role="tablist" className="h-[34px] shrink-0 flex items-end">
        <button role="tab" aria-selected="true" className="w-[83px] h-[31px] pt-px pl-px bg-white border border-b-0 border-[#d9d9d9]">Model</button>
        <button role="tab" aria-selected="false" className="w-[72px] h-7 pt-px border border-l-0 border-b-0 border-[#d9d9d9]">Tasks</button>
      </div>
      <div className="flex-1 min-h-0 flex flex-col bg-white border border-b-0 border-t-0 border-[#d9d9d9] pt-[3px] pl-[2px] pr-1 mr-px">
        <ModelTree />
      </div>
    </aside>
  );
}

/* ---------- 3D view ---------- */

const NAVY = "#0a0a6e";
const BRIGHT = "#0a0aff";

// Serpentine duct seen from the front
const duct =
  "M1036 339L1342 334.500C1351 335 1356 343 1356.500 352L1359.500 510C1359 519 1353 524 1344 524.500L1107 528C1101 529 1101 537 1107 538" +
  "L1343 535C1353 535 1360 543 1360.500 551L1362 662C1361 672 1357 677 1348 678L1088 681C1082 683 1082 690 1088 691" +
  "L1347 688C1357 688 1362 695 1362.500 703L1364 768C1363 777 1358 783 1349 784L1021 788V752" +
  "L1317 748C1321 746 1321 738 1317 737L1045 740.500C1034 740 1029 733 1028.500 724L1027 640C1027 630 1031 622 1040 621.500" +
  "L1292 618.500C1296 616 1296 608 1292 607.500L1040 611C1030 610 1026 604 1025.500 595L1024 460C1024 452 1029 446 1036 445.500" +
  "L1256 442.500C1260 440 1260 432 1256 431L1036 434C1028 433 1023 428 1023 418L1021.500 355C1022 345 1027 340 1036 339Z";

const creases = [
  "M1287 355L1357 351.500", "M1288 434L1358 430", "M1288 444L1358 441", "M1289 511L1359 508",
  "M1290 556L1360 552.500", "M1295 610L1361 607", "M1292 621L1361 618", "M1292 664L1362 661",
  "M1293 708.500L1363 705.500", "M1319 739L1363 737", "M1293 751L1363 747", "M1294 770L1364 767",
];

const undersides = [
  "M1032 340.500L1276 338", "M1036 446.500L1195 444.500L1256 442.500", "M1106 539.500L1280 537.500L1343 535.500",
  "M1036 623L1217 621L1292 618.500", "M1087 692.500L1280 690.500L1346 688.500", "M1021 753L1180 751L1317 748.500",
];

function Viewport() {
  return (
    <svg viewBox="500 220 979 704" preserveAspectRatio="xMidYMid slice" className="w-full h-full" fill="none" strokeLinejoin="round" role="img" aria-label="Speaker cabinet model">
      <defs>
        <linearGradient id="sky" gradientUnits="userSpaceOnUse" x1="0" y1="220" x2="0" y2="924">
          <stop offset="0" stopColor="#333366" />
          <stop offset="1" stopColor="#9494a6" />
        </linearGradient>
        <linearGradient id="ring" x1="0" y1="0" x2="0" y2="1">
          <stop offset="0" stopColor="#06063c" />
          <stop offset=".3" stopColor={BRIGHT} />
          <stop offset=".75" stopColor={BRIGHT} />
          <stop offset="1" stopColor="#06063c" />
        </linearGradient>
        <linearGradient id="shade" x1="0" y1="0" x2="0" y2="1">
          <stop offset="0" stopColor="#050530" />
          <stop offset="1" stopColor={NAVY} />
        </linearGradient>
        <linearGradient id="shadeUp" x1="0" y1="1" x2="0" y2="0">
          <stop offset="0" stopColor="#050530" />
          <stop offset="1" stopColor={NAVY} />
        </linearGradient>
        <clipPath id="ductClip"><path d={duct} /></clipPath>
      </defs>
      <rect x="500" y="220" width="979" height="704" fill="url(#sky)" />

      {/* shell */}
      <path d="M932 350C932 336 941 323 958 322L1045 317.500L1345 314C1362 315 1375 328 1376 345L1384 765C1384 784 1372 799 1352 801L1100 806.500L955 808.500C945 808 941 803 940 794L936 560Z" fill={NAVY} stroke="#000" strokeWidth="2" />
      <path d="M933 354C933 337 942 324 958 323L1038 319C1022 323 1011 334 1011 351Z" fill="url(#shade)" />
      <path d="M941 794L1018 790C1020 800 1028 805 1038 805L955 807.500C946 807 941 802 941 794Z" fill="url(#shadeUp)" />
      <path d="M932 356L1011 352M940 794.500L1018 790" stroke="#000" strokeWidth="1.800" />
      <path d="M1345 315.500C1361 317 1371 328 1372 345L1381.500 765C1381 784 1370 798 1352 800.500" stroke="#000" strokeWidth="2" />

      {/* front face */}
      <path d="M1013.500 352C1013 334 1025 320 1043 319.500L1345 316.500C1358 317 1368 328 1369 342L1379 765C1378 784 1368 797 1350 799L1040 803.500C1026 803 1020 797 1019.500 789Z" fill={BRIGHT} stroke="#000" strokeWidth="1.500" />
      <path d="M1011 350L1018 789" stroke="#000" strokeWidth="3.500" />
      <path d="M1040 318.500L1345 315.500M1036 805.500L1100 805L1350 800.500" stroke="#000" strokeWidth="2.500" />
      <path d="M1010 351C1010 334 1022 320 1040 318.500" stroke="#000" strokeWidth="2" />
      <path d="M1048 318.500L1066 318.300M1123 317.700L1142 317.500M1199 316.500L1219 316.300M1275 315.500L1295 315.300M1174 801.500L1195 801.300M1250 800.500L1271 800.300M1327 799.500L1347 799.300" stroke={BRIGHT} />

      {/* duct interior and what is seen through it */}
      <path d={duct} fill={NAVY} />
      <g clipPath="url(#ductClip)">
        <path d="M1270 336L1357 333V352L1286 355Z" fill="url(#shade)" />
        <path d="M1288 511L1360 508V526H1280Z" fill="url(#shadeUp)" />
        <path d="M1276 538L1361 534V553L1289 556Z" fill="url(#shade)" />
        <path d="M1291 664L1363 661V679H1283Z" fill="url(#shadeUp)" />
        <path d="M1278 692L1363 687V706L1292 708Z" fill="url(#shade)" />
        <path d="M1293 770L1365 767V786H1286Z" fill="url(#shadeUp)" />
        <path d={creases.join("")} stroke="#000" strokeWidth="1.600" />
        <path d="M1010 341L1272 339C1282 341 1286 348 1286.500 356L1289.500 510C1289 518 1287 523 1280 527L1106 530V541L1276 539C1285 541 1289 547 1290 556L1292 662C1292 671 1290 676 1284 680L1087 683V694L1280 692C1290 694 1293 703 1293 710L1294.500 772C1294 780 1292 784 1287 787L1010 790Z" fill="url(#sky)" stroke="#000" strokeWidth="1.500" />
      </g>
      <path d={duct} stroke="#000" strokeWidth="1.600" />
      <path d={undersides.join("")} stroke="#000" strokeWidth="3" />

      {/* rounded ends of the hanging baffles */}
      <path d="M1034 532L1102 528L1104 540L1034 541.500Q1030 537 1034 532Z" fill="#07074a" stroke="#000" strokeWidth="1.500" />
      <path d="M1033 537L1102 534M1034 539.500L1103 537" stroke="#000" strokeWidth="2" />
      <path d="M1029 684L1084 681.500L1086 692L1029 696Z" fill="#07074a" stroke="#000" strokeWidth="1.500" />
      <path d="M1029 689L1083 686M1029 691.500L1084 689.500" stroke="#000" strokeWidth="2" />
      <path d="M1108 528.500C1102 529 1102 537 1108 538ZM1089 681.500C1083 682 1083 691 1089 691Z" fill={BRIGHT} />
      <path d="M1020 751V790" stroke="#000" strokeWidth="2.500" />

      {/* driver cut-out */}
      <g stroke="#000" strokeWidth="1.400">
        <ellipse cx="975" cy="529.500" rx="34" ry="90.500" fill="url(#ring)" />
        <ellipse cx="978.500" cy="529.500" rx="31" ry="88" fill={NAVY} />
        <ellipse cx="980" cy="529.500" rx="30.500" ry="83" fill="url(#ring)" />
        <ellipse cx="984" cy="529.500" rx="25" ry="80" fill="url(#sky)" />
      </g>

      {/* terminal cut-out */}
      <path d="M945.500 756L1013.500 754L1014 788L946 792Z" fill="url(#sky)" stroke="#000" strokeWidth="2.500" />
    </svg>
  );
}

export default function App() {
  return (
    <div className="h-screen flex flex-col overflow-hidden bg-[#f0f0f0] font-['Open_Sans','Noto_Sans',sans-serif] text-[17px] leading-6 text-black">
      <header className="h-[66px] shrink-0 bg-white text-[#999]">
        <div className="flex h-[2px] pl-[779px]">
          <span className="w-[72px] bg-[#d0283e]" />
          <span className="w-[290px] bg-[#e5e5e5]" />
        </div>
        <div className="flex items-center h-8 pl-[2px] gap-[5px]">
          <FreeCadLogo />
          <h1>FreeCAD 0.20.1</h1>
        </div>
        <nav className="flex h-8 items-center pl-3 pt-px gap-[25px]">
          {menus.map((m) => (
            <button key={m}>{m}</button>
          ))}
        </nav>
      </header>

      <div className="flex shrink-0">
        <Toolbar className={divided} inner="w-[657px]"><Tools items={fileTools} /></Toolbar>
        <Toolbar className={divided}>
          <label className="relative block w-[216px]">
            <span className="absolute left-2 top-1 pointer-events-none"><WorkbenchIcon /></span>
            <select aria-label="Workbench" className="appearance-none w-full h-8 pl-[35px] border border-[#adadad] bg-[#e1e1e1] text-black">
              <option>Part Design</option>
            </select>
            <svg viewBox="0 0 12 8" className="absolute right-2 top-3 w-3 h-2 pointer-events-none" fill="none" stroke="#444" strokeWidth="1.300" aria-hidden="true">
              <path d="M1 1l5 5 5-5" />
            </svg>
          </label>
        </Toolbar>
        <Toolbar className={divided} inner="w-[186px]"><Tools items={macroTools} /></Toolbar>
        <Toolbar className="flex-1" inner="w-[204px]"><Tools items={structureTools} /></Toolbar>
      </div>
      <Toolbar className="shrink-0" inner="w-[842px]"><Tools items={viewTools} /></Toolbar>
      <div className="flex shrink-0">
        <Toolbar className={divided} inner="w-[520px]"><Tools items={helperTools} /></Toolbar>
        <Toolbar className="flex-1 min-w-0" inner="w-[946px]"><Tools items={modelingTools} /></Toolbar>
      </div>

      <main className="flex-1 min-h-0 flex gap-[7px]">
        <ComboView />
        <div className="flex-1 min-w-0 pt-px"><Viewport /></div>
      </main>
    </div>
  );
}
